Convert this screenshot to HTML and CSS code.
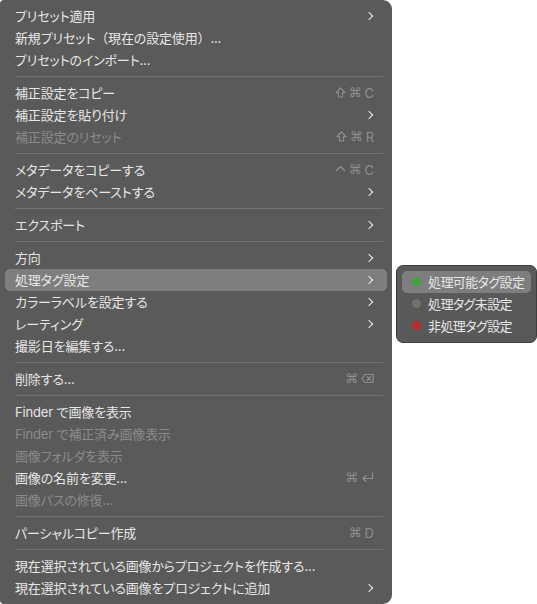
FILE: index.html
```html
<!DOCTYPE html>
<html lang="ja">
<head>
    <meta charset="UTF-8">
    <meta name="viewport" content="width=device-width, initial-scale=1.0">
    <title>コンテキストメニュー</title>
    <link rel="stylesheet" href="styles.css">
</head>
<body>
    <div class="menu">
        <div class="item"><span>プリセット適用</span><span class="chevron"></span></div>
        <div class="item"><span>新規プリセット<span class="wide">（</span>現在の設定使用<span class="wide">）</span>...</span></div>
        <div class="item"><span>プリセットのインポート...</span></div>
        <div class="sep"></div>
        <div class="item">
            <span>補正設定をコピー</span>
            <span class="keys">
                <svg class="key" width="11" height="11" viewBox="0 0 11 11"><path d="M5.5 1 L10 5.6 H7.5 V10 H3.5 V5.6 H1 Z"/></svg>
                <span class="cmd">⌘</span><span class="letter">C</span>
            </span>
        </div>
        <div class="item"><span>補正設定を貼り付け</span><span class="chevron"></span></div>
        <div class="item disabled">
            <span>補正設定のリセット</span>
            <span class="keys">
                <svg class="key" width="11" height="11" viewBox="0 0 11 11"><path d="M5.5 1 L10 5.6 H7.5 V10 H3.5 V5.6 H1 Z"/></svg>
                <span class="cmd">⌘</span><span class="letter">R</span>
            </span>
        </div>
        <div class="sep"></div>
        <div class="item">
            <span>メタデータをコピーする</span>
            <span class="keys">
                <svg class="key" width="11" height="11" viewBox="0 0 11 11"><path d="M1.5 6.5 L5.5 2.5 L9.5 6.5"/></svg>
                <span class="cmd">⌘</span><span class="letter">C</span>
            </span>
        </div>
        <div class="item"><span>メタデータをペーストする</span><span class="chevron"></span></div>
        <div class="sep"></div>
        <div class="item"><span>エクスポート</span><span class="chevron"></span></div>
        <div class="sep"></div>
        <div class="item"><span>方向</span><span class="chevron"></span></div>
        <div class="item active"><span>処理タグ設定</span><span class="chevron"></span></div>
        <div class="item"><span>カラーラベルを設定する</span><span class="chevron"></span></div>
        <div class="item"><span>レーティング</span><span class="chevron"></span></div>
        <div class="item"><span>撮影日を編集する...</span></div>
        <div class="sep"></div>
        <div class="item">
            <span>削除する...</span>
            <span class="keys">
                <span class="cmd">⌘</span>
                <svg class="key" width="13" height="11" viewBox="0 0 13 11"><path d="M4 1.5 H12 V9.5 H4 L0.8 5.5 Z M6.3 3.6 L9.7 7.4 M9.7 3.6 L6.3 7.4"/></svg>
            </span>
        </div>
        <div class="sep"></div>
        <div class="item"><span>Finder で画像を表示</span></div>
        <div class="item disabled"><span>Finder で補正済み画像表示</span></div>
        <div class="item disabled"><span>画像フォルダを表示</span></div>
        <div class="item">
            <span>画像の名前を変更...</span>
            <span class="keys">
                <span class="cmd">⌘</span>
                <svg class="key" width="13" height="11" viewBox="0 0 13 11"><path d="M11.5 1 V6.5 H2 M5 3.5 L2 6.5 L5 9.5"/></svg>
            </span>
        </div>
        <div class="item disabled"><span>画像パスの修復...</span></div>
        <div class="sep"></div>
        <div class="item">
            <span>パーシャルコピー作成</span>
            <span class="keys"><span class="cmd">⌘</span><span class="letter">D</span></span>
        </div>
        <div class="sep"></div>
        <div class="item"><span>現在選択されている画像からプロジェクトを作成する...</span></div>
        <div class="item"><span>現在選択されている画像をプロジェクトに追加</span><span class="chevron"></span></div>
    </div>

    <div class="submenu">
        <div class="item active"><span class="dot green"></span><span>処理可能タグ設定</span></div>
        <div class="item"><span class="dot gray"></span><span>処理タグ未設定</span></div>
        <div class="item"><span class="dot red"></span><span>非処理タグ設定</span></div>
    </div>
</body>
</html>
```

FILE: styles.css
```css
body {
    margin: 0;
    background-color: #fff;
    font-family: Inter, "Noto Sans CJK JP", sans-serif;
    font-size: 13px;
    font-feature-settings: "palt";
    letter-spacing: -0.15px;
    color: #e6e6e6;
}

.menu {
    width: 392px;
    height: 604px;
    box-sizing: border-box;
    padding: 5px 0;
    background-color: #5a5a5a;
    border-radius: 4px 9px 9px 4px;
    display: flex;
    flex-direction: column;
}

.item {
    height: 22px;
    margin: 0 5px;
    padding: 0 13px 1px 10px;
    box-sizing: border-box;
    display: flex;
    align-items: center;
    justify-content: space-between;
    border-radius: 5px;
    white-space: nowrap;
}

.item.active {
    background-color: #7e7e7e;
}

.item.disabled {
    color: #8a8a8a;
}

.wide {
    font-feature-settings: normal;
}

.sep {
    height: 1px;
    margin: 5px 9px 5px 15px;
    background-color: #737373;
}

.chevron {
    width: 5px;
    height: 5px;
    margin-right: 2px;
    border-top: 1.7px solid #eee;
    border-right: 1.7px solid #eee;
    transform: rotate(45deg);
}

.keys {
    display: flex;
    align-items: center;
    gap: 3px;
    color: #8e8e8e;
    letter-spacing: 0;
}

.key {
    fill: none;
    stroke: #8e8e8e;
    stroke-width: 1.2;
    stroke-linejoin: round;
    stroke-linecap: round;
}

.cmd {
    font-family: "DejaVu Sans", sans-serif;
    font-size: 13px;
}

.letter {
    font-family: Inter, sans-serif;
    font-size: 13px;
}

.submenu {
    position: absolute;
    left: 396px;
    top: 265px;
    width: 141px;
    box-sizing: border-box;
    padding: 5px 0;
    background-color: #595959;
    border: 1px solid #3e3e3e;
    border-radius: 7px;
    letter-spacing: -0.6px;
}

.submenu .item {
    justify-content: flex-start;
    padding: 0 4px 1px 10px;
    gap: 7px;
}

.dot {
    flex-shrink: 0;
    width: 9px;
    height: 9px;
    border-radius: 50%;
}

.dot.green {
    background-color: #44a040;
}

.dot.gray {
    background-color: #727272;
}

.dot.red {
    background-color: #b82c2c;
}
```
